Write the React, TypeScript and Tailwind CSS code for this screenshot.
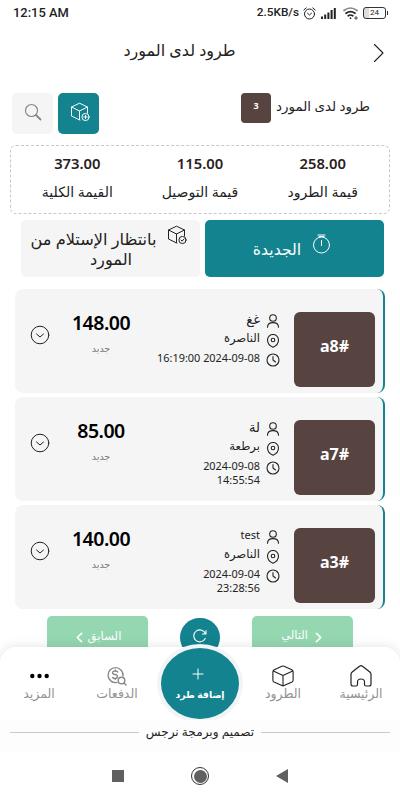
import type { ReactNode } from "react"

const parcels = [
  { id: "a8#", name: "غغ", city: "الناصرة", date: ["16:19:00 2024-09-08"], price: "148.00" },
  { id: "a7#", name: "لة", city: "برطعة", date: ["2024-09-08", "14:55:54"], price: "85.00" },
  { id: "a3#", name: "test", city: "الناصرة", date: ["2024-09-04", "23:28:56"], price: "140.00" },
]

const totals = [
  { value: "258.00", label: "قيمة الطرود" },
  { value: "115.00", label: "قيمة التوصيل" },
  { value: "373.00", label: "القيمة الكلية" },
]

function Svg({ className, box = 24, stroke = 1.5, children }: { className: string; box?: number; stroke?: number; children: ReactNode }) {
  return (
    <svg className={className} viewBox={`0 0 ${box} ${box}`} fill="none" stroke="currentColor" strokeWidth={stroke} strokeLinecap="round" strokeLinejoin="round">
      {children}
    </svg>
  )
}

function Box({ className, mark }: { className: string; mark?: "plus" | "check" }) {
  return (
    <Svg className={className} box={20} stroke={1}>
      {mark ? (
        <>
          <path d="M10 18 9 17.7 1.5 14V5L9.5 1.2 17.5 5v6M1.5 5l8 4 8-4M9.5 9v8.5" />
          <circle cx="15.5" cy="15" r="3.6" />
          <path d={mark === "plus" ? "M13.8 15h3.4M15.5 13.3v3.4" : "m14 15 1.1 1.2 2-2.3"} />
        </>
      ) : (
        <path d="M9 1.1 2 4.4Q.8 5 .8 6.3v7.5q0 1.1 1 1.6l7.2 3.3q1 .5 2 0l7.2-3.3q1-.5 1-1.6V6.3Q19.2 5 18 4.4L11 1.1q-1-.4-2 0ZM1.2 5.5 10 9.6l8.8-4.1M10 9.6V19" />
      )}
    </Svg>
  )
}

function StatusBar() {
  return (
    <div dir="ltr" className="flex h-[26px] items-center justify-between pl-[13px] pr-[12px] text-[#222]">
      <span className="font-['Roboto'] text-[12.9px] font-medium">12:15 AM</span>
      <div className="flex items-center">
        <span className="mr-[4px] font-['Roboto'] text-[11.8px] font-medium">2.5KB/s</span>
        <Svg className="mr-[5px] h-[13px] w-[13px]" box={13} stroke={1}>
          <circle cx="6.5" cy="7" r="5" />
          <path d="M.8 3 3.2.9M12.2 3 9.8.9M4.5 6.2l2 1.8 2-1.8" />
        </Svg>
        <svg className="mr-[7px] h-[12px] w-[15px]" viewBox="0 0 15 12" fill="currentColor">
          <path d="M0 9.500h2V12H0zM3.200 7.500h2V12h-2zM6.400 5.500h2V12h-2zM9.600 3h2v9h-2zM12.800 1h2v11h-2z" />
        </svg>
        <Svg className="mr-[5px] h-[15px] w-[15px]" box={15} stroke={1.7}>
          <path d="M1 4.500q6.500-5 13 0" stroke="#888" />
          <path d="M3 7.300q4.500-3.300 9 0M5.200 9.800q2.300-1.600 4.600 0" />
          <path d="M7.500 12v.2" />
          <path d="M13 10.500v3M11.500 12h3" strokeWidth=".8" />
        </Svg>
        <div className="flex h-[12px] w-[23px] items-center justify-center rounded-[3px] border border-[#333] bg-gradient-to-r from-[#ddd] from-25% to-white to-25% font-['Roboto'] text-[8px] leading-none">24</div>
        <div className="ml-px h-[4px] w-px bg-[#333]" />
      </div>
    </div>
  )
}

function Parcel({ parcel }: { parcel: (typeof parcels)[number] }) {
  return (
    <div className="flex h-[104px] rounded-[8px] border-r-2 border-[#12838f] bg-[#f5f5f5] pr-[8px]">
      <div className="mt-[23px] flex h-[75px] w-[81px] shrink-0 items-center justify-center rounded-[6px] bg-[#574441] pb-[8px] text-[16px] font-bold text-white" dir="ltr">
        {parcel.id}
      </div>
      <div className="mr-[14px] flex w-[132px] flex-col pt-[22px] text-[12px] leading-[14px] text-[#222]">
        <div className="flex h-[19px] gap-[6px]">
          <Svg className="mt-[3px] h-[14px] w-[14px]" box={14} stroke={1.1}>
            <circle cx="7" cy="4" r="3.3" />
            <path d="M1.500 13.200q0-4.600 5.500-4.600t5.500 4.600" />
          </Svg>
          <span className={parcel.name === "test" ? "mt-px text-[11px]" : "mt-px text-[13px]"}>{parcel.name}</span>
        </div>
        <div className="flex h-[20px] gap-[6px]">
          <Svg className="mt-[4px] h-[14px] w-[14px]" box={14} stroke={1.1}>
            <circle cx="7" cy="6" r="1.8" />
            <path d="M7 13.200C4 12 1.500 9 1.500 6a5.500 5.500 0 0 1 11 0C12.500 9 10 12 7 13.200Z" />
          </Svg>
          <span className="mt-px text-[11.6px]">{parcel.city}</span>
        </div>
        <div className="flex gap-[6px]">
          <Svg className="mt-[3px] h-[14px] w-[14px] shrink-0" box={14} stroke={1.1}>
            <circle cx="7" cy="7" r="6" />
            <path d="M7 3.500V7l2.500 2" />
          </Svg>
          <div className="mt-px whitespace-nowrap text-right text-[10.9px]" dir="ltr">
            {parcel.date.map((d) => (
              <div key={d}>{d}</div>
            ))}
          </div>
        </div>
      </div>
      <div className="mr-[5px] flex w-[84px] flex-col items-center pt-[20px]">
        <span className="text-[19.5px] font-semibold leading-[28px] tracking-[-0.5px] text-black">{parcel.price}</span>
        <span className="mt-[5px] text-[9.5px] leading-[14px] text-[#777]">جديد</span>
      </div>
      <Svg className="ml-[15px] mr-auto mt-[36px] h-[20px] w-[20px] text-[#222]" box={20} stroke={1}>
        <circle cx="10" cy="10" r="8.8" />
        <path d="m6.500 9 3.500 3 3.500-3" />
      </Svg>
    </div>
  )
}

function NavItem({ label, children }: { label: string; children: ReactNode }) {
  return (
    <div className="flex w-[78px] flex-col items-center pt-[18px]">
      <div className="flex h-[22px] items-center">{children}</div>
      <span className="-mt-px whitespace-nowrap text-[12.5px] leading-[15px] text-[#929292]">{label}</span>
    </div>
  )
}

export default function App() {
  return (
    <div dir="rtl" className="flex h-[800px] w-[400px] flex-col overflow-hidden bg-white font-['Noto_Sans','DejaVu_Sans',sans-serif] text-[#222]">
      <StatusBar />
      <header className="flex h-[53px] items-center pr-[11px]">
        <Svg className="h-[20px] w-[20px]" box={20} stroke={1.1}>
          <path d="m5.500 1.500 8.500 8.500-8.500 8.500" />
        </Svg>
        <h1 className="-mt-[5px] flex-1 pr-[10px] text-center text-[16px] leading-none">طرود لدى المورد</h1>
      </header>

      <div className="mt-[14px] flex h-[41px] justify-between pl-[12px] pr-[30px]">
        <div className="flex">
          <span className="mt-[5px] text-[13.4px] leading-[16px]">طرود لدى المورد</span>
          <span className="mr-[5px] flex h-[30px] w-[30px] justify-center rounded-[4px] bg-[#574441] pt-[6px] text-[9px] font-bold leading-[13px] text-white">3</span>
        </div>
        <div className="flex gap-[5px]">
          <div className="flex h-[41px] w-[41px] items-center justify-center rounded-[5px] bg-[#12838f] text-white">
            <Box className="mr-[-3px] mt-[-4px] h-[20px] w-[20px]" mark="plus" />
          </div>
          <div className="flex h-[41px] w-[41px] items-center justify-center rounded-[5px] bg-[#f5f5f5] text-[#888]">
            <Svg className="ml-px mt-[-4px] h-[18px] w-[18px]" box={18} stroke={1.2}>
              <circle cx="7.5" cy="7.5" r="6" />
              <path d="m12 12 4.500 4.500" strokeWidth="1.8" />
            </Svg>
          </div>
        </div>
      </div>

      <div className="mx-[10px] mt-[11px] grid h-[69px] grid-cols-3 rounded-[6px] border border-dashed border-[#c8c8c8] px-[5px] text-center">
        {totals.map((t) => (
          <div key={t.label}>
            <div className="mt-[8px] text-[14.8px] font-semibold leading-[18px] text-[#2a1d1d]">{t.value}</div>
            <div className="mt-[12px] whitespace-nowrap text-[14px] leading-[16px]">{t.label}</div>
          </div>
        ))}
      </div>

      <div className="mt-[6px] flex gap-[5px] pr-[16px]">
        <div className="flex h-[57px] w-[179px] justify-center gap-[11px] rounded-[5px] bg-[#12838f] pr-[5px] text-white">
          <Svg className="mt-[14px] h-[20px] w-[19px]" box={19} stroke={1}>
            <circle cx="9.5" cy="10.5" r="8" />
            <path d="M6 .5h7M7 2h5M9.500 6v5" />
          </Svg>
          <span className="mt-[20px] text-[15.7px] leading-[18px]">الجديدة</span>
        </div>
        <div className="flex h-[57px] w-[179px] rounded-[5px] bg-[#f5f5f5] pr-[13px]">
          <Box className="mt-[5px] h-[20px] w-[20px] shrink-0" mark="check" />
          <div className="mr-[10px] mt-[9px] w-[127px] whitespace-nowrap text-center text-[16.2px] leading-[20px]">
            بانتظار الإستلام من
            <br />
            <span className="pl-[35px]">المورد</span>
          </div>
        </div>
      </div>

      <div className="mx-[15px] mt-[12px] flex flex-col gap-[4px]">
        {parcels.map((p) => (
          <Parcel key={p.id} parcel={p} />
        ))}
      </div>

      <div className="mt-[7px] flex h-[31px] shrink-0 justify-between overflow-hidden px-[47px]">
        <div className="flex h-[42px] w-[101px] justify-center gap-[5px] rounded-[5px] bg-[#94d7b0] text-white">
          <Svg className="mt-[16px] h-[11px] w-[11px]" box={11} stroke={1.7}><path d="m3.500 1.300 4.200 4.200-4.200 4.200" /></Svg>
          <span className="mt-[12px] text-[11.5px] leading-[14px]">التالي</span>
        </div>
        <div className="mt-[2px] flex h-[39px] w-[40px] justify-center rounded-full bg-[#12838f] pt-[11px] text-white">
          <Svg className="h-[14px] w-[14px]" box={14} stroke={1.1}>
            <path d="M12.200 9.500A6 6 0 1 1 12.500 5M13 1.500V5H9.500" />
          </Svg>
        </div>
        <div className="flex h-[42px] w-[101px] justify-center gap-[3px] rounded-[5px] bg-[#94d7b0] text-white">
          <span className="mt-[12px] text-[11.7px] leading-[14px]">السابق</span>
          <Svg className="mt-[16px] h-[11px] w-[11px]" box={11} stroke={1.7}><path d="M7.500 1.300 3.300 5.500l4.200 4.200" /></Svg>
        </div>
      </div>

      <nav className="flex h-[73px] shrink-0 rounded-t-[16px] bg-white shadow-[0_0_12px_rgba(0,0,0,0.12)]">
        <NavItem label="الرئيسية">
          <Svg className="h-[22px] w-[22px] text-[#222]" box={22} stroke={1.2}>
            <path d="M1 9.300Q1 8 2.200 7L9.500 1.200q1.500-1 3 0L19.800 7Q21 8 21 9.300V19q0 2-2 2h-3q-1.500 0-1.500-1.500V17q0-3-3.500-3t-3.500 3v2.500Q7.500 21 6 21H3q-2 0-2-2Z" />
          </Svg>
        </NavItem>
        <NavItem label="الطرود"><Box className="h-[22px] w-[22px] text-[#222]" /></NavItem>
        <div className="ml-[1px] mr-[1px] mt-[-3px] flex h-[79px] w-[86px] shrink-0 flex-col items-center rounded-[50%] border-4 border-[#f3f4f5] bg-[#12838f] pt-[20px] text-white">
          <Svg className="mr-[4px] h-[12px] w-[12px]" box={12} stroke={1}><path d="M6 1v10M1 6h10" /></Svg>
          <span className="mt-[8px] whitespace-nowrap text-[9.3px] font-bold leading-[13px]">إضافة طرد</span>
        </div>
        <NavItem label="الدفعات">
          <Svg className="h-[20px] w-[20px] text-[#888]" box={20} stroke={1.4}>
            <path d="M10 16.500A7.500 7.500 0 1 1 16 10M10.700 6q-1-1-2.500-1C4.500 5 5 8.500 8 8.500s3.500 4 0 4q-1.500 0-2.500-1M8.300 4v1m0 7.500v1" />
            <circle cx="14.5" cy="14.5" r="3.3" />
            <path d="m17 17 2 2" />
          </Svg>
        </NavItem>
        <NavItem label="المزيد">
          <svg className="h-[6px] w-[19px]" viewBox="0 0 19 6"><circle cx="2.3" cy="3" r="2.2" /><circle cx="9.5" cy="3" r="2.2" /><circle cx="16.7" cy="3" r="2.2" /></svg>
        </NavItem>
      </nav>

      <footer className="flex h-[32px] items-start gap-[7px] bg-[#fdfdfd] px-[10px]">
        <div className="mt-[12px] h-px flex-1 bg-[#c8c8c8]" />
        <span className="mt-[4px] whitespace-nowrap text-[12.1px] leading-[16px]">تصميم وبرمجة نرجس</span>
        <div className="mt-[12px] h-px flex-1 bg-[#c8c8c8]" />
      </footer>

      <div dir="ltr" className="flex h-[48px] shrink-0 items-center justify-center gap-[67px] text-[#606060]">
        <div className="h-[12px] w-[12px] bg-[#606060]" />
        <div className="flex h-[18px] w-[18px] items-center justify-center rounded-full border border-[#333]">
          <div className="h-[13px] w-[13px] rounded-full bg-[#606060]" />
        </div>
        <svg className="h-[14px] w-[12px]" viewBox="0 0 12 14" fill="currentColor"><path d="M12 0v14L0 7z" /></svg>
      </div>
    </div>
  )
}
